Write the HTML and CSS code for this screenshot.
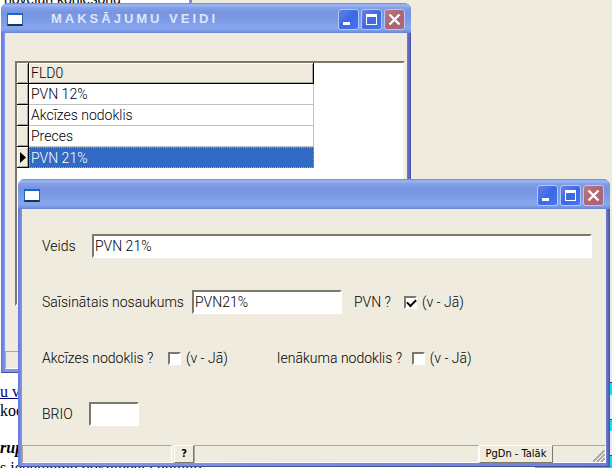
FILE: index.html
```html
<!DOCTYPE html>
<html lang="lv">
<head>
<meta charset="utf-8">
<title>Maksājumu veidi</title>
<link rel="stylesheet" href="styles.css">
</head>
<body>
<main class="desktop">
  <div class="panel"></div>
  <p class="doc doc-top">novelun konlesõnu</p>
  <a class="doc doc-link" href="#">u veidi</a>
  <p class="doc doc-code">kods</p>
  <p class="doc doc-group">rupa</p>
  <p class="doc doc-line">s ieņemumu dokumenta numurs</p>
  <div class="strip"><span></span><span></span><span></span></div>
  <div class="cells"></div>

  <section class="window list-window">
    <header class="titlebar">
      <span class="app-icon"></span>
      <h1 class="title">MAKSĀJUMU VEIDI</h1>
      <div class="controls">
        <button class="control" aria-label="Minimize"><svg viewBox="0 0 21 21"><path d="M5 13h7v3H5z" fill="#fff"/></svg></button>
        <button class="control" aria-label="Maximize"><svg viewBox="0 0 21 21"><path d="M5 5h11v11H5zM6 8v7h9V8z" fill="#fff" fill-rule="evenodd"/></svg></button>
        <button class="control close" aria-label="Close"><svg viewBox="0 0 21 21"><path d="M5.500 5.500l10 10M15.500 5.500l-10 10" stroke="#fff" stroke-width="2.400"/></svg></button>
      </div>
    </header>
    <div class="list-body">
      <div class="grid-box">
        <table class="grid">
          <thead><tr><th class="marker"></th><th class="head">FLD0</th></tr></thead>
          <tbody>
            <tr><td class="marker"></td><td>PVN 12%</td></tr>
            <tr><td class="marker"></td><td>Akcīzes nodoklis</td></tr>
            <tr><td class="marker"></td><td>Preces</td></tr>
            <tr class="selected"><td class="marker"><svg class="arrow" viewBox="0 0 6 11"><path d="M0 0l6 5.500L0 11z"/></svg></td><td>PVN 21%</td></tr>
          </tbody>
        </table>
      </div>
    </div>
    <footer class="status"><span class="pane wide"></span></footer>
  </section>

  <section class="window edit-window">
    <header class="titlebar">
      <span class="app-icon"></span>
      <div class="controls">
        <button class="control" aria-label="Minimize"><svg viewBox="0 0 21 21"><path d="M5 13h7v3H5z" fill="#fff"/></svg></button>
        <button class="control" aria-label="Maximize"><svg viewBox="0 0 21 21"><path d="M5 5h11v11H5zM6 8v7h9V8z" fill="#fff" fill-rule="evenodd"/></svg></button>
        <button class="control close" aria-label="Close"><svg viewBox="0 0 21 21"><path d="M5.500 5.500l10 10M15.500 5.500l-10 10" stroke="#fff" stroke-width="2.400"/></svg></button>
      </div>
    </header>
    <form class="form">
      <div class="row">
        <label class="label-kind" for="kind">Veids</label>
        <input class="field grow" id="kind" type="text" value="PVN 21%">
      </div>
      <div class="row">
        <label class="label-short" for="short">Saīsinātais nosaukums</label>
        <input class="field short" id="short" type="text" value="PVN21%">
        <label class="label-vat" for="vat">PVN ?</label>
        <input class="check" id="vat" type="checkbox" checked>
        <span class="hint">(v - Jā)</span>
      </div>
      <div class="row">
        <label class="label-excise" for="excise">Akcīzes nodoklis ?</label>
        <input class="check" id="excise" type="checkbox">
        <span class="hint">(v - Jā)</span>
        <label class="label-income" for="income">Ienākuma nodoklis ?</label>
        <input class="check" id="income" type="checkbox">
        <span class="hint">(v - Jā)</span>
      </div>
      <div class="row">
        <label class="label-brio" for="brio">BRIO</label>
        <input class="field brio" id="brio" type="text">
      </div>
    </form>
    <footer class="status">
      <span class="pane"></span>
      <button class="status-button help">?</button>
      <span class="pane wide"></span>
      <button class="status-button next">PgDn - Talāk</button>
      <span class="pane end"><svg class="grip" viewBox="0 0 12 12"><path d="M0 12L12 0M4 12l8-8M8 12l4-4" stroke="#aca899" stroke-width="2"/><path d="M2 12L12 2M6 12l6-6M10 12l2-2" stroke="#fff"/></svg></span>
    </footer>
  </section>
</main>
</body>
</html>
```
FILE: styles.css
```css
* { box-sizing: border-box; }

body {
  margin: 0;
  background: #fff;
  color: #000;
  font: 300 14px/16px Roboto, "Liberation Sans", sans-serif;
}

.desktop {
  position: relative;
  height: 100vh;
  overflow: hidden;
}

.panel {
  position: absolute;
  inset: 0 0 108px 189px;
  border-left: 3px solid #8090dc;
  background: #efebde;
}

.doc {
  position: absolute;
  left: 0;
  margin: 0;
  white-space: nowrap;
  font: 16px/18px "Liberation Serif", serif;
}
.doc-top { top: -9px; left: 4px; font: 14px/16px "Liberation Sans", sans-serif; }
.doc-link { top: 383px; color: #000080; }
.doc-code { top: 402px; }
.doc-group { top: 439px; font-weight: bold; font-style: italic; }
.doc-line { top: 459px; }

.strip {
  position: absolute;
  right: 0;
  bottom: 0;
  width: 8px;
  height: 108px;
  display: flex;
  flex-direction: column;
  gap: 24px;
  padding-top: 22px;
  background: #eee6f4;
}
.strip span { height: 21px; background: #00e8f0; border-top: 1px solid #444; }
.cells {
  position: absolute;
  right: 0;
  bottom: 0;
  width: 77px;
  height: 2px;
  background: #00d8e0;
}

.window {
  position: absolute;
  display: flex;
  flex-direction: column;
  padding: 0 4px 4px;
  border-radius: 7px 7px 0 0;
  background: linear-gradient(90deg, #6478d8, #8296e8 4px, #7080d4 calc(100% - 4px), #4850a8);
  box-shadow: inset 0 -1px #4850a0;
}
.list-window { inset: 3px 201px 95px 1px; }
.edit-window { inset: 179px 2px 1px 18px; }

.titlebar {
  display: flex;
  align-items: center;
  height: 30px;
  margin: 0 -4px;
  padding: 2px 6px 0;
  border-radius: 7px 7px 0 0;
  background: linear-gradient(#6d86d8, #9db9f2 2px, #839fe6 5px, #7894e0 9px, #7d9be6 18px, #86a8f0 25px, #7a98e4 28px, #6a82d0);
}

.app-icon {
  width: 16px;
  height: 13px;
  border: 1px solid #2868a8;
  border-top: 2px solid #1868c8;
  border-bottom: 2px solid #103858;
  background: #fff;
}

.title {
  margin: 0 0 0 28px;
  color: #dce6fc;
  font: bold 13px/16px "Liberation Sans", sans-serif;
  letter-spacing: 3px;
}

.controls { display: flex; gap: 2px; margin-left: auto; }
.control {
  width: 21px;
  height: 21px;
  padding: 0;
  border: 1px solid #b4c6f8;
  border-radius: 3px;
  background: linear-gradient(135deg, #6484e4, #3c68e4 50%, #4478f0);
}
.control svg { display: block; width: 21px; height: 21px; margin: -1px; }
.control.close { background: linear-gradient(135deg, #bc7888, #b06470 50%, #a86880); }

.list-body {
  flex: 1;
  min-height: 0;
  padding: 28px 2px 45px 10px;
  background: #efebde;
}
.grid-box {
  height: 100%;
  border: 2px solid;
  border-color: #7c786c #f6f4ec #fff #7c786c;
  background: #fff;
}
.grid {
  width: 297px;
  border-collapse: separate;
  border-spacing: 0;
  table-layout: fixed;
}
.grid th, .grid td {
  height: 21px;
  padding: 0 0 0 2px;
  border-right: 1px solid #c0c0c0;
  border-bottom: 1px solid #c0c0c0;
  font-weight: 300;
  text-align: left;
}
.grid .marker {
  width: 12px;
  padding: 0 0 0 3px;
  border-color: #000;
  background: #efebde;
  box-shadow: inset 1px 1px #fff, inset -1px -1px #aca899;
}
.grid .head {
  border-color: #000;
  background: #efebde;
  box-shadow: inset 1px 1px #fff, inset -1px -1px #aca899;
}
.grid .selected td:last-child {
  border: 1px dotted #d0a060;
  padding-left: 1px;
  background: #316ac5;
  color: #fff;
}
.arrow { display: block; width: 6px; height: 11px; }

.form {
  flex: 1;
  display: flex;
  flex-direction: column;
  gap: 32px;
  padding: 25px 14px 0 20px;
  background: #efebde;
}
.row { display: flex; align-items: center; height: 24px; }
.label-kind { width: 50px; }
.label-short { width: 150px; }
.label-vat { width: 50px; margin-left: 12px; }
.label-excise { width: 126px; }
.label-income { width: 135px; margin-left: 49px; }
.label-brio { width: 47px; }
.hint { margin-left: 5px; }

.field {
  height: 24px;
  padding: 0 1px;
  border: 2px solid;
  border-color: #7c786c #fff #fff #7c786c;
  border-radius: 0;
  background: #fff;
  color: #000;
  font: inherit;
}
.grow { flex: 1; min-width: 0; }
.short { width: 150px; }
.brio { width: 50px; }

.check {
  appearance: none;
  width: 13px;
  height: 13px;
  margin: 0;
  border: 2px solid;
  border-color: #7c786c #fff #fff #7c786c;
  background: #fff;
}
.check:checked::before {
  content: "";
  display: block;
  width: 7px;
  height: 4px;
  margin: 1px;
  border: solid #000;
  border-width: 0 0 2px 2px;
  transform: rotate(-45deg);
}

.status {
  display: flex;
  height: 18px;
  background: #efebde;
}
.pane {
  width: 150px;
  margin-right: 2px;
  border: 1px solid;
  border-color: #aca899 #fff #fff #aca899;
}
.pane.wide { flex: 1; margin: 0; }
.pane.end {
  display: flex;
  justify-content: flex-end;
  align-items: flex-end;
  width: 53px;
  margin: 0;
  border-left: 0;
}
.grip { display: block; width: 12px; height: 12px; }
.status-button {
  padding: 0;
  border: 1px solid;
  border-color: #fff #7c786c #7c786c #fff;
  background: #efebde;
  color: #000;
  font: 11px/14px "DejaVu Sans Condensed", "DejaVu Sans", sans-serif;
}
.help { width: 20px; font-weight: bold; }
.next { width: 74px; }
```
